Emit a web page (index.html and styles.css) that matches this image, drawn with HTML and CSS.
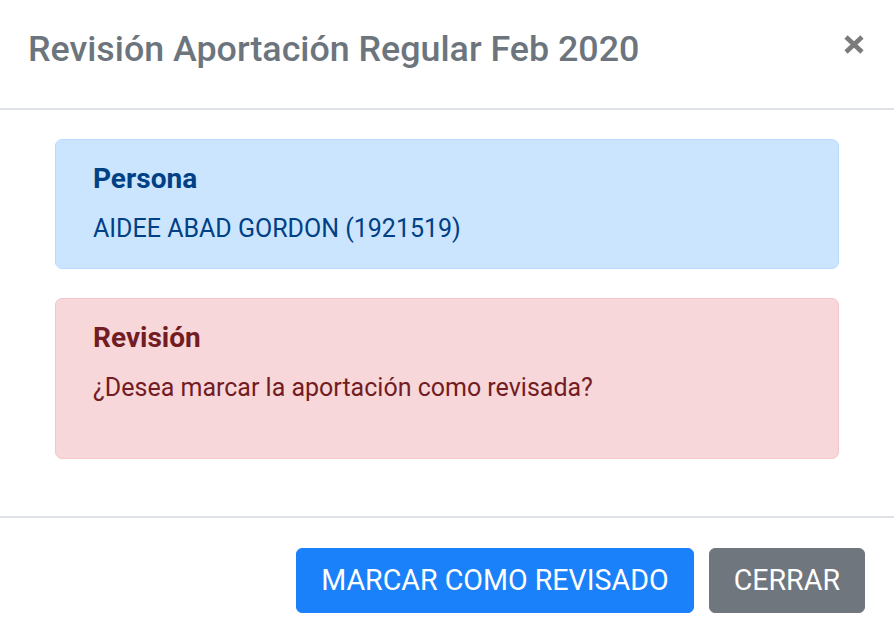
FILE: index.html
```html
<!DOCTYPE html>
<html lang="es">
<head>
<meta charset="utf-8">
<title>Revisión Aportación Regular Feb 2020</title>
<link rel="stylesheet" href="styles.css">
</head>
<body>
<div class="modal">
  <header class="modal-header">
    <h5 class="modal-title">Revisión Aportación Regular Feb 2020</h5>
    <button class="close" type="button" aria-label="Cerrar">
      <svg width="22" height="21" viewBox="0 0 22 21" aria-hidden="true">
        <path d="M3 3 L19 18 M19 3 L3 18" stroke="#7b7b7b" stroke-width="4.6" stroke-linecap="butt" fill="none"/>
      </svg>
    </button>
  </header>
  <main class="modal-body">
    <div class="alert alert-primary">
      <h4 class="alert-heading">Persona</h4>
      <p class="alert-text">AIDEE ABAD GORDON (1921519)</p>
    </div>
    <div class="alert alert-danger">
      <h4 class="alert-heading">Revisión</h4>
      <p class="alert-text alert-text-spaced">¿Desea marcar la aportación como revisada?</p>
    </div>
  </main>
  <footer class="modal-footer">
    <button class="btn btn-primary" type="button">MARCAR COMO REVISADO</button>
    <button class="btn btn-secondary" type="button">CERRAR</button>
  </footer>
</div>
</body>
</html>
```

FILE: styles.css
```css
* {
  box-sizing: border-box;
}

html, body {
  margin: 0;
  padding: 0;
  background: #ffffff;
}

body {
  font-family: Roboto, "Liberation Sans", Arial, sans-serif;
  color: #212529;
}

.modal {
  display: flex;
  flex-direction: column;
  width: 894px;
  height: 642px;
  overflow: hidden;
}

.modal-header {
  display: flex;
  align-items: flex-start;
  justify-content: space-between;
  height: 110px;
  padding: 23px 29px 0 28px;
  border-bottom: 2px solid #dee2e6;
}

.modal-title {
  margin: 0;
  font-size: 35.8px;
  font-weight: 500;
  line-height: 52px;
  color: #6c757d;
}

.close {
  display: flex;
  padding: 0;
  margin-top: 11px;
  border: 0;
  background: transparent;
  cursor: pointer;
}

.modal-body {
  display: flex;
  flex-direction: column;
  padding: 29px 55px 0 55px;
  height: 406px;
}

.alert {
  border: 1px solid transparent;
  border-radius: 7px;
  padding: 23px 37px 20px 37px;
  margin-bottom: 29px;
}

.alert-primary {
  background: #cce5ff;
  border-color: #b8daff;
  color: #004085;
}

.alert-danger {
  background: #f8d7da;
  border-color: #f5c6cb;
  color: #721c24;
}

.alert-heading {
  margin: 0 0 15px 0;
  font-size: 28px;
  font-weight: 700;
  line-height: 31px;
}

.alert-text {
  margin: 0;
  font-size: 25px;
  font-weight: 400;
  line-height: 39px;
}

.alert-text-spaced {
  margin-bottom: 31px;
}

.modal-footer {
  display: flex;
  justify-content: flex-end;
  align-items: flex-start;
  gap: 15px;
  padding: 30px 29px 0 0;
  border-top: 2px solid #dee2e6;
  flex: 1;
}

.btn {
  height: 65px;
  padding: 0 24px;
  border: 1px solid transparent;
  border-radius: 6px;
  font-family: Roboto, "Liberation Sans", Arial, sans-serif;
  font-size: 28.6px;
  font-weight: 400;
  line-height: 39px;
  color: #ffffff;
  cursor: pointer;
}

.btn-primary {
  background: #1a81fb;
  border-color: #1a81fb;
}

.btn-secondary {
  background: #6f767d;
  border-color: #6f767d;
}
```
